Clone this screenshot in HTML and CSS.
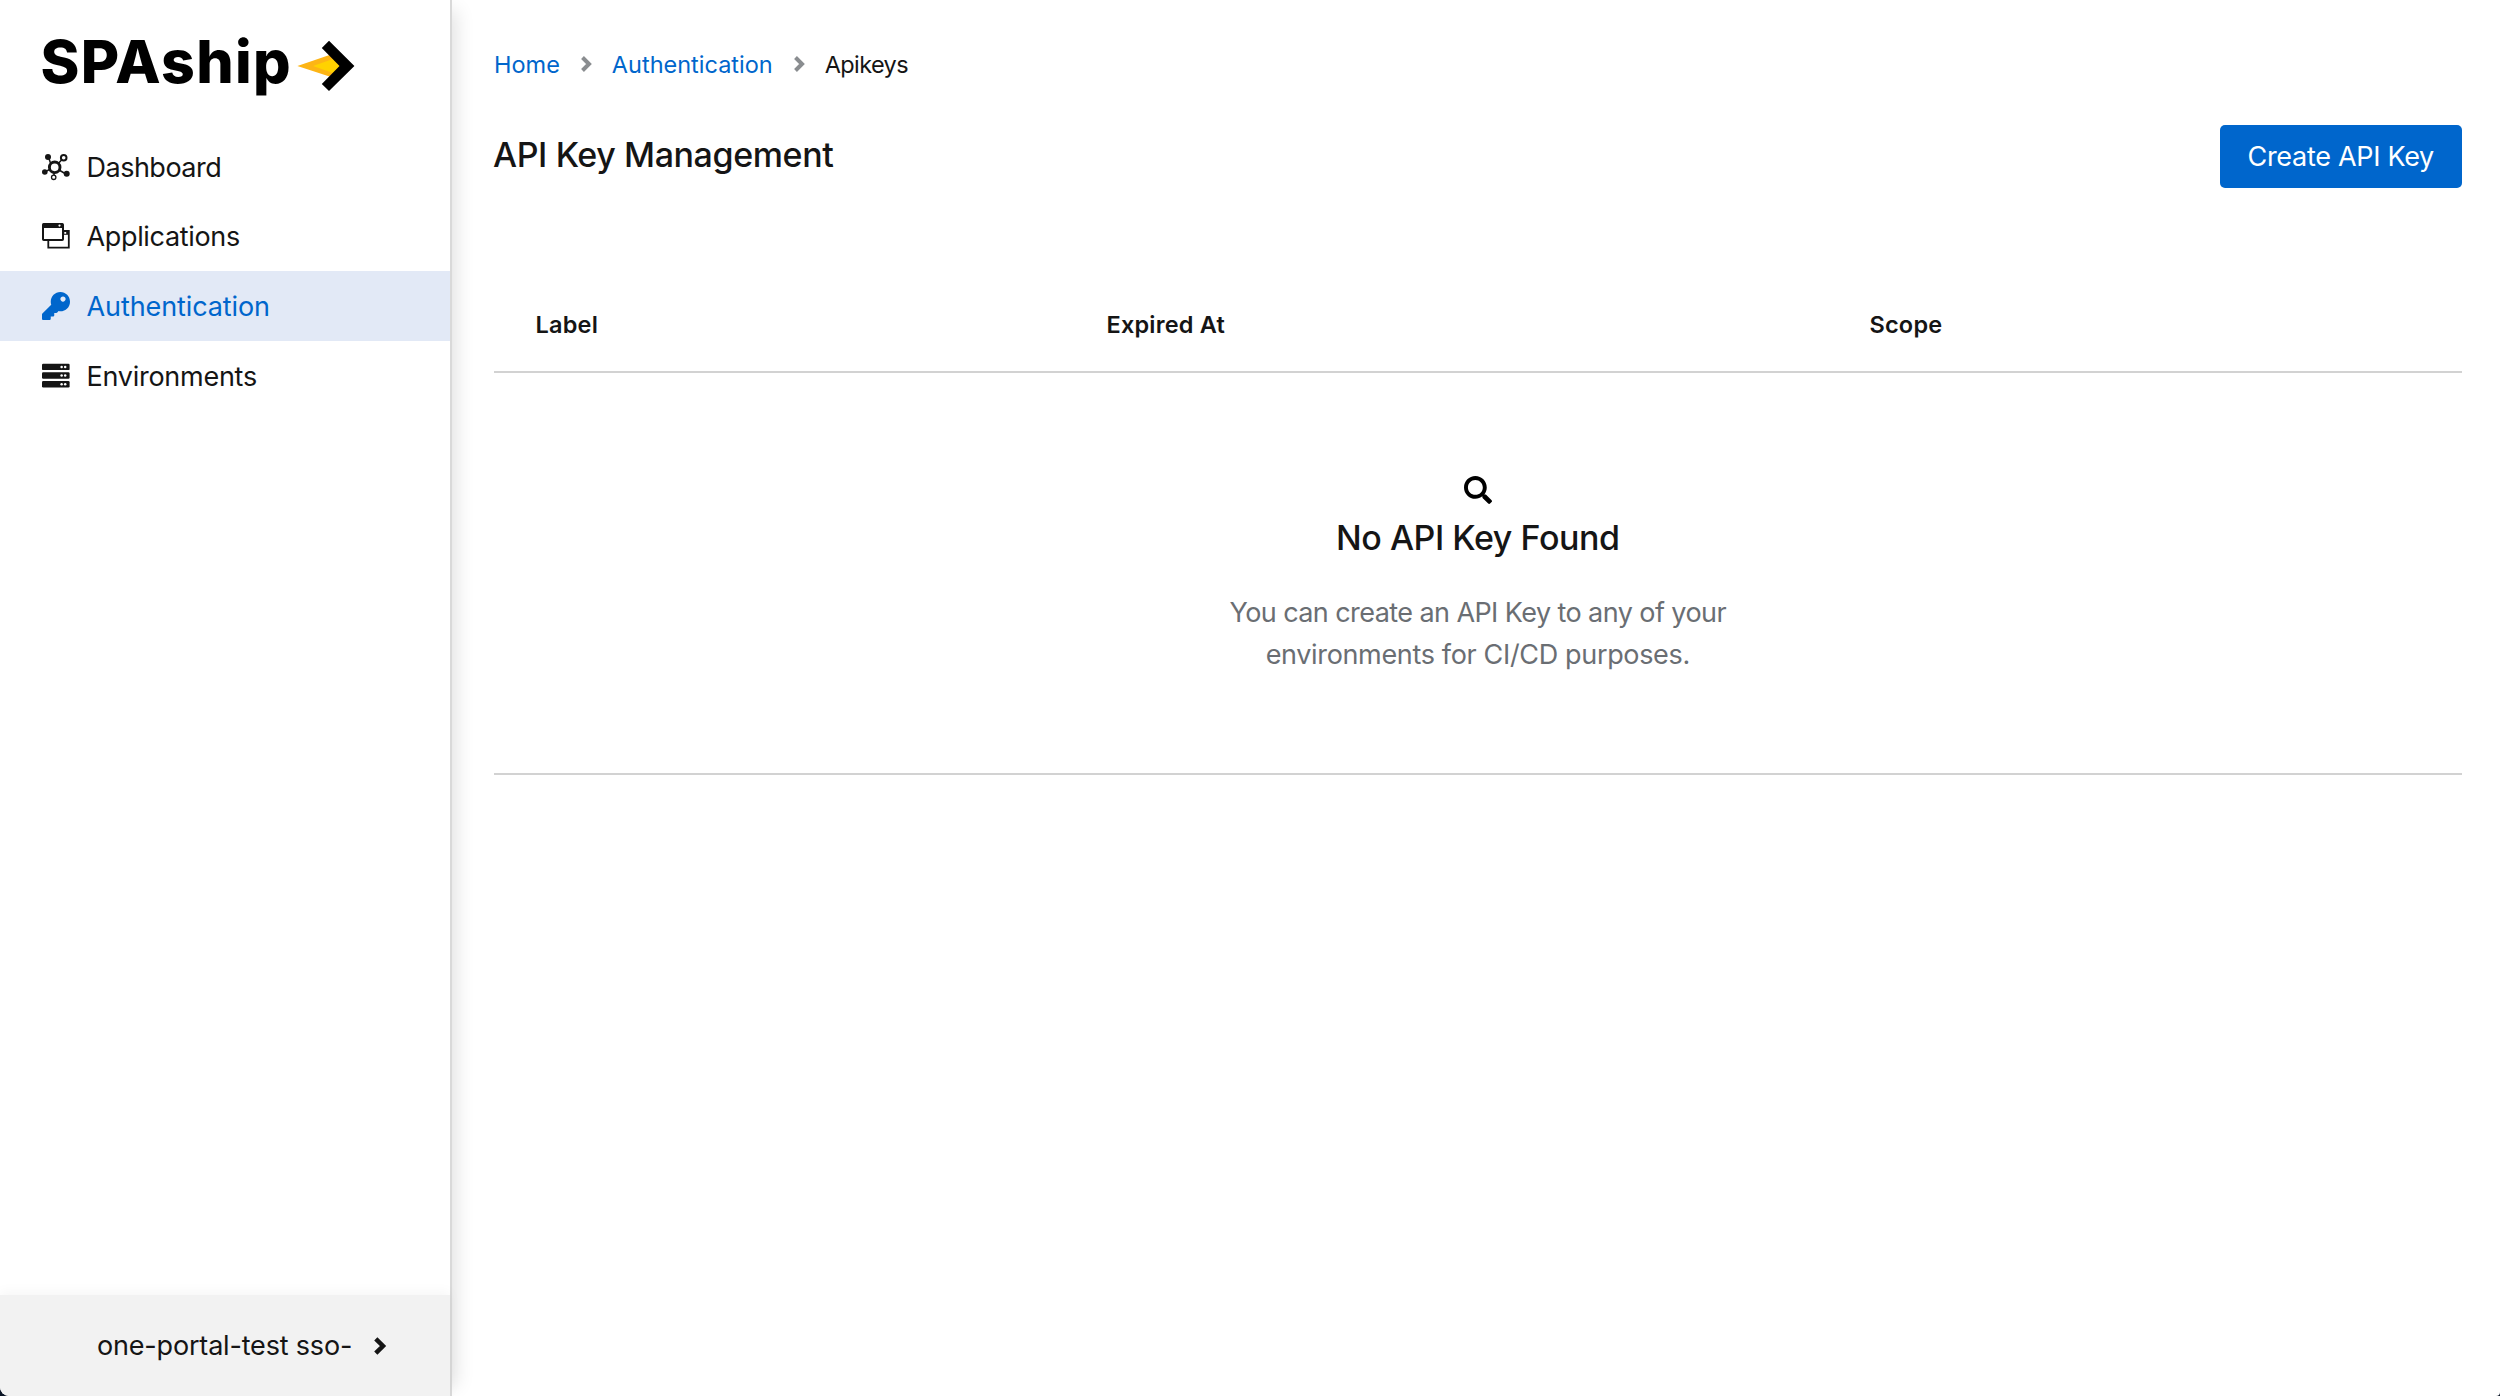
FILE: index.html
```html
<!DOCTYPE html>
<html lang="en">
<head>
<meta charset="utf-8">
<title>SPAship - API Key Management</title>
<link rel="stylesheet" href="styles.css">
</head>
<body>
<div class="page">
  <aside class="sidebar">
    <svg class="logo" viewBox="30 20 340 90" role="img" aria-label="SPAship">
      <text class="logo-text" x="40.5" y="82.500" textLength="250">SPAship</text>
      <path fill="#fdb515" d="M297.4 66 329.5 55 342 66 329.5 76.5Z"/>
      <path fill="#ffd200" d="M313 66 333 59 342 66 333 73Z"/>
      <path d="M329 40.7 354.4 66 329 91 321.8 84 339.5 66 321.8 48Z"/>
    </svg>
    <nav class="nav">
      <a class="nav-item nav-dashboard">
        <svg class="icon" viewBox="0 0 28 28">
          <g fill="none" stroke="currentColor">
            <circle cx="12.7" cy="14.3" r="5.3" stroke-width="2.9"/>
            <circle cx="21.7" cy="4.7" r="2.8" stroke-width="2"/>
            <circle cx="11.7" cy="24.3" r="2.200" stroke-width="1.3"/>
            <path d="M16.5 10.2 19.8 6.8M8.5 10 7 5.8M7.5 16.5 4 18.3M17 17 23 20.5M12 20V22" stroke-width="1.500"/>
          </g>
          <circle cx="6" cy="4" r="3"/>
          <circle cx="2.8" cy="19" r="2.800"/>
          <circle cx="24.7" cy="20.7" r="3"/>
        </svg>
        <span>Dashboard</span>
      </a>
      <a class="nav-item nav-applications">
        <svg class="icon" viewBox="0 0 28 28">
          <path fill="none" stroke="currentColor" stroke-width="1.8" d="M21 9H26.8V25.6H6.3V18"/>
          <path d="M21 8.3H27V12.8H21Z"/>
          <path fill="#fff" d="M22.3 10H24.2V11.8H22.3Z"/>
          <rect x="1" y="2" width="20" height="16" rx=".8" fill="#fff" stroke="currentColor" stroke-width="2"/>
          <path d="M.8 1.5H20.8V6H.8Z"/>
          <circle cx="17.5" cy="3.6" r="1.1" fill="#fff"/>
        </svg>
        <span>Applications</span>
      </a>
      <a class="nav-item nav-active">
        <svg class="icon" viewBox="0 0 512 512">
          <path d="M512 176.001C512 273.203 433.202 352 336 352c-11.22 0-22.19-1.062-32.827-3.069l-24.012 27.014A23.999 23.999 0 0 1 261.223 384H224v40c0 13.255-10.745 24-24 24h-40v40c0 13.255-10.745 24-24 24H24c-13.255 0-24-10.745-24-24v-78.059c0-6.365 2.529-12.47 7.029-16.971l161.802-161.802C163.108 213.814 160 195.271 160 176 160 78.798 238.797.001 335.999 0 433.488-.001 512 78.511 512 176.001zM336 128c0 26.51 21.49 48 48 48s48-21.49 48-48-21.49-48-48-48-48 21.49-48 48z"/>
        </svg>
        <span>Authentication</span>
      </a>
      <a class="nav-item nav-environments">
        <svg class="icon" viewBox="0 0 28 28">
          <rect y="1.7" width="27.6" height="6.4" rx="1.2"/>
          <rect y="10.3" width="27.6" height="6.4" rx="1.2"/>
          <rect y="19" width="27.6" height="6.4" rx="1.2"/>
          <g fill="#fff">
            <circle cx="19.6" cy="4.9" r="1.25"/><circle cx="23.2" cy="4.9" r="1.25"/>
            <circle cx="19.6" cy="13.5" r="1.25"/><circle cx="23.2" cy="13.5" r="1.25"/>
            <circle cx="19.6" cy="22.2" r="1.25"/><circle cx="23.2" cy="22.2" r="1.25"/>
          </g>
        </svg>
        <span>Environments</span>
      </a>
    </nav>
    <div class="account">
      <span>one-portal-test sso-</span>
      <svg class="account-arrow" viewBox="0 0 12 18"><path d="M1.800 1.800 9 9 1.800 16.200"/></svg>
    </div>
  </aside>
  <main class="main">
    <nav class="breadcrumb">
      <a>Home</a>
      <svg class="divider" viewBox="0 0 10 16"><path d="M1.500 1.500 8 8 1.500 14.500"/></svg>
      <a>Authentication</a>
      <svg class="divider" viewBox="0 0 10 16"><path d="M1.500 1.500 8 8 1.500 14.500"/></svg>
      <span class="current">Apikeys</span>
    </nav>
    <header class="header">
      <h1 class="title">API Key Management</h1>
      <button class="create">Create API Key</button>
    </header>
    <section class="table">
      <div class="table-head">
        <span>Label</span>
        <span>Expired At</span>
        <span>Scope</span>
      </div>
      <div class="empty">
        <svg class="search" viewBox="0 0 512 512">
          <path d="M505 442.7L405.3 343c-4.5-4.500-10.600-7-17-7H372c27.600-35.300 44-79.700 44-128C416 93.100 322.900 0 208 0S0 93.100 0 208s93.100 208 208 208c48.300 0 92.700-16.400 128-44v16.300c0 6.400 2.500 12.500 7 17l99.700 99.700c9.400 9.400 24.600 9.400 33.900 0l28.300-28.300c9.400-9.400 9.400-24.600.1-34zM208 344c-75.200 0-136-60.800-136-136S132.800 72 208 72s136 60.800 136 136-60.800 136-136 136z"/>
        </svg>
        <h2 class="empty-title">No API Key Found</h2>
        <p class="empty-text"><span class="line-one">You can create an API Key to any of your</span><br>environments for CI/CD purposes.</p>
      </div>
    </section>
  </main>
</div>
</body>
</html>
```

FILE: styles.css
```css
* {
  box-sizing: border-box;
}

body {
  margin: 0;
  background: #0b1526;
  color: #151515;
  font-family: Inter, sans-serif;
  font-size: 27px;
}

.page {
  display: flex;
  height: 1396px;
  overflow: hidden;
  border-radius: 0 0 4px 9px;
  background: #fff;
}

.sidebar {
  display: flex;
  flex-direction: column;
  width: 452px;
  flex: none;
  border-right: 2px solid #d9d9d9;
  box-shadow: 14px 0 18px -10px rgba(3, 3, 3, .12);
}

.logo {
  width: 340px;
  height: 90px;
  margin: 20px 0 0 30px;
  fill: #000;
}

.logo-text {
  font-size: 59px;
  font-weight: 800;
}

.nav {
  display: flex;
  flex-direction: column;
  flex: 1;
  margin-top: 22px;
}

.nav-item {
  display: flex;
  align-items: center;
  gap: 16.5px;
  height: 69.67px;
  padding-left: 42px;
  letter-spacing: -.26px;
}

.nav-item span {
  padding-top: 1px;
}

.nav-dashboard {
  letter-spacing: -.5px;
}

.nav-applications {
  letter-spacing: -.34px;
}

.nav-active {
  background: #e2e9f6;
  color: #06c;
  letter-spacing: -.1px;
}

.icon {
  width: 28px;
  height: 28px;
  flex: none;
  fill: currentColor;
}

.account {
  display: flex;
  align-items: center;
  gap: 22px;
  height: 101px;
  padding-left: 97px;
  background: #f2f2f2;
  box-shadow: 0 -3px 12px rgba(3, 3, 3, .04);
  letter-spacing: -.18px;
}

.account-arrow {
  width: 12px;
  height: 18px;
  overflow: visible;
  fill: none;
  stroke: #151515;
  stroke-width: 4.5px;
}

.main {
  flex: 1;
  min-width: 0;
  padding: 49px 38.5px 0 42px;
}

.breadcrumb {
  display: flex;
  align-items: center;
  height: 31px;
  font-size: 23.5px;
  color: #06c;
}

.divider {
  width: 10px;
  height: 16px;
  margin: 0 21px 2px;
  overflow: visible;
  fill: none;
  stroke: #8a8d90;
  stroke-width: 4px;
}

.current {
  color: #151515;
  letter-spacing: -.6px;
}

.header {
  display: flex;
  justify-content: space-between;
  margin-top: 45px;
}

.title {
  margin: 0 0 0 -1px;
  font-size: 34px;
  font-weight: 500;
  line-height: 60px;
  letter-spacing: -.4px;
}

.create {
  width: 241.5px;
  height: 62.5px;
  padding: 1px 0 0;
  border: 0;
  border-radius: 5px;
  background: #06c;
  color: #fff;
  font: inherit;
  letter-spacing: -.3px;
}

.table {
  margin-top: 87.5px;
  border-bottom: 2px solid #d2d2d2;
}

.table-head {
  display: grid;
  grid-template-columns: 571px 763px 1fr;
  height: 98px;
  padding-left: 41.5px;
  border-bottom: 2px solid #d2d2d2;
  font-size: 23.5px;
  font-weight: 600;
  line-height: 99px;
  letter-spacing: .2px;
}

.empty {
  display: flex;
  flex-direction: column;
  align-items: center;
  height: 400px;
  padding-top: 103px;
}

.search {
  width: 28px;
  height: 28px;
}

.empty-title {
  margin: 13px 0 33px;
  font-size: 34px;
  font-weight: 500;
  line-height: 42px;
  letter-spacing: -.45px;
}

.empty-text {
  margin: 0;
  color: #6a6e73;
  line-height: 42px;
  letter-spacing: -.34px;
  text-align: center;
}

.line-one {
  letter-spacing: -.58px;
}
```
